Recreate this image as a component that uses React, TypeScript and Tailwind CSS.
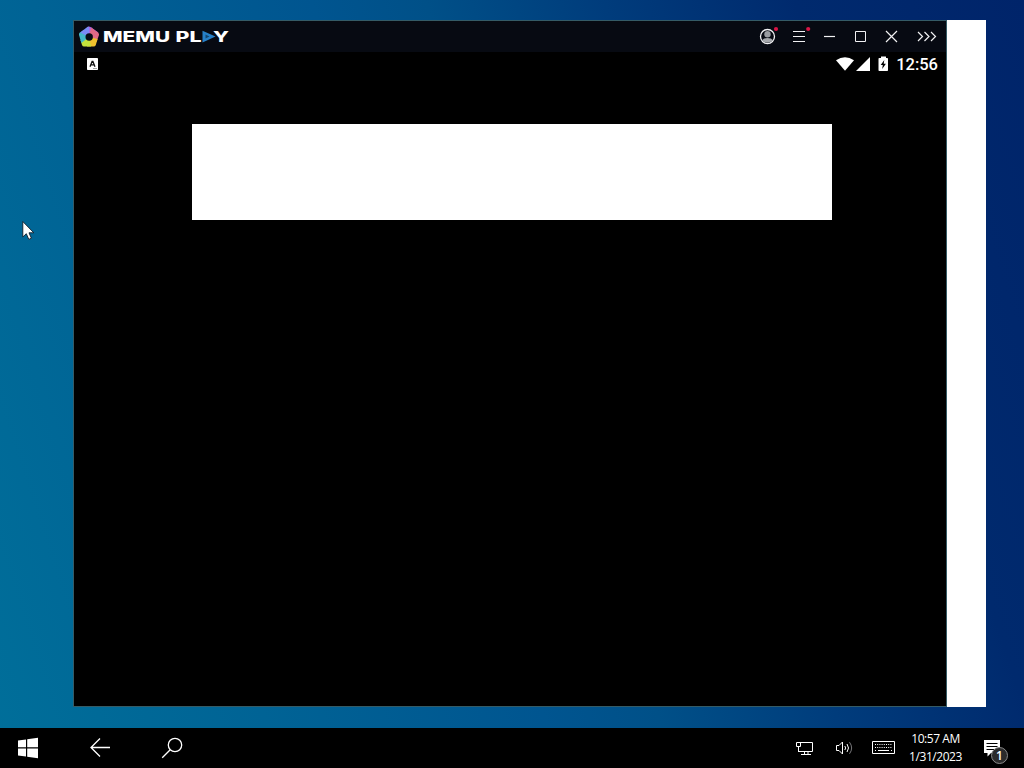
const LogoMark = () => (
  <svg className="h-[22px] w-[22px]" viewBox="0 0 22 22">
    <path d="M11 11 L9 1 Q11 0 13 1.2 L20.3 6.5 Z" fill="#a864e8" />
    <path d="M11 11 L13 1.5 L20 6.4 Q21.3 7.5 21 9 L18.5 16 Z" fill="#e26a86" />
    <path d="M11 11 L19.6 13 L17.8 19 Q17.2 20.6 15.5 20.6 L9 20.6 Z" fill="#f0c22e" />
    <path d="M11 11 L13 20.6 L6 20.6 Q4.6 20.6 4 19 L2.5 14 Z" fill="#c4e33c" />
    <path d="M11 11 L3.4 17 L1 9 Q0.6 7.6 2 6.6 L6 3.8 Z" fill="#42b8c8" />
    <path d="M11 11 L2.2 6.5 L9 1.2 Q10 0.6 11 0.7 Z" fill="#7b8cf5" />
    <circle cx="11.2" cy="11" r="3.7" fill="#080d14" />
  </svg>
);

const Wordmark = () => (
  <svg
    className="h-6 w-[132px] fill-white font-['Inter','Liberation_Sans',sans-serif] text-[15px] font-extrabold"
    viewBox="0 0 132 24"
  >
    <text x="1" y="17" textLength="67" lengthAdjust="spacingAndGlyphs">MEMU</text>
    <text x="73.5" y="17" textLength="26" lengthAdjust="spacingAndGlyphs">PL</text>
    <path d="M100.5 5.8 L113.5 11.6 L100.5 17.4 Z" fill="#2680c8" />
    <path d="M103.5 9.6 L107.5 11.6 L103.5 13.6 Z" fill="#12466f" />
    <text x="111" y="17" textLength="16" lengthAdjust="spacingAndGlyphs">Y</text>
  </svg>
);

const WindowButtons = () => (
  <svg className="h-[30px] w-[182px]" viewBox="0 0 182 30" fill="none" stroke="#f1f1f3" strokeWidth="1.2">
    <circle cx="9.5" cy="15.5" r="7" strokeWidth="1.3" />
    <circle cx="9.5" cy="13.2" r="3.2" fill="#999ca1" stroke="none" />
    <path d="M4 19.3 Q5.5 17 9.5 17 Q13.5 17 15 19.3 Q12.8 21.6 9.5 21.6 Q6.2 21.6 4 19.3 Z" fill="#a5a8ac" stroke="none" />
    <circle cx="18" cy="8" r="2.1" fill="#d81546" stroke="none" />
    <path d="M35 10.5 H47 M35 15.5 H47 M35 20.5 H47" />
    <circle cx="50.2" cy="8" r="2.1" fill="#d81546" stroke="none" />
    <path d="M66 15.5 H77" />
    <path d="M97.5 10.5 H107.5 V20.5 H97.5 Z" strokeWidth="1" />
    <path d="M128 10 L139 21 M139 10 L128 21" />
    <path d="M160 11 L164.5 15.5 L160 20 M166.5 11 L171 15.5 L166.5 20 M173 11 L177.5 15.5 L173 20" />
  </svg>
);

const KeyboardBadge = () => (
  <svg className="h-3 w-[11px]" viewBox="0 0 11 12">
    <rect width="11" height="12" rx="0.8" fill="#fff" />
    <path d="M3 8.7 L5.1 3.4 H5.9 L8 8.7 M4 6.8 H7" fill="none" stroke="#111" strokeWidth="1.3" />
    <path d="M6.5 10.5 H7.5 M8.5 10.5 H9.5" stroke="#444" />
  </svg>
);

const StatusIcons = () => (
  <svg className="h-4 w-[53px] fill-white" viewBox="0 0 53 16">
    <path d="M0 4.2 Q9 -1.8 18 4.2 L9 14.7 Z" />
    <path d="M34 1 V15 H20 Z" />
    <path d="M45 0.5 H50 V2 H51.2 Q52 2 52 2.8 V14.2 Q52 15 51.2 15 H43.3 Q42.5 15 42.5 14.2 V2.8 Q42.5 2 43.3 2 H45 Z" />
    <path d="M48.3 4 L44.7 9 H46.8 L46.2 13 L49.9 7.8 H47.7 Z" fill="#000" />
  </svg>
);

const TitleBar = () => (
  <div className="flex h-[31px] items-center bg-[#070a12]">
    <div className="flex w-[684px] items-center pl-1">
      <LogoMark />
      <div className="pl-0.5">
        <Wordmark />
      </div>
    </div>
    <div className="h-[31px]">
      <WindowButtons />
    </div>
  </div>
);

const StatusBar = () => (
  <div className="flex h-6 items-center justify-between pr-2 pl-[13px] text-white">
    <KeyboardBadge />
    <div className="flex items-center">
      <StatusIcons />
      <span className="w-[49px] pt-px text-right font-[Roboto,sans-serif] text-[16.5px] leading-[23px] font-medium">12:56</span>
    </div>
  </div>
);

const Emulator = () => (
  <div className="h-[687px] w-[874px] border border-[#355b66] bg-black">
    <TitleBar />
    <StatusBar />
    <div className="mt-12 ml-[118px] h-24 w-[640px] bg-white" />
  </div>
);

const Taskbar = () => (
  <div className="flex h-10 bg-black text-white">
    <div className="flex flex-1 items-center">
      <svg className="h-10 w-[200px]" viewBox="0 0 200 40" fill="none" stroke="#fff" strokeWidth="1.3">
        <path d="M18 12.6 L26 11.5 V19.3 H18 Z M27.2 11.3 L38 9.8 V19.3 H27.2 Z M18 20.5 H26 V28.6 L18 27.5 Z M27.2 20.5 H38 V30.2 L27.2 28.7 Z" fill="#fff" stroke="none" />
        <path d="M110 19.5 H91 M100 10.5 L91 19.5 L100 28.5" />
        <circle cx="175" cy="17" r="6.7" />
        <path d="M170.2 21.8 L162.2 29.8" />
      </svg>
    </div>
    <svg className="h-10 w-[114px]" viewBox="0 0 114 40" fill="none" stroke="#fff">
      <path d="M15 14.5 H27.5 V23.5 H14 M19.5 23.5 V26 M23 23.5 V26 M16 26.5 H26" />
      <path d="M11.5 14.5 H15.5 V18.5 H11.5 Z M13.5 18.5 V24" />
      <path d="M51.5 17.5 H54 L57.5 14 V26 L54 22.5 H51.5 Z" />
      <path d="M59.8 18 Q61.5 20 59.8 22" />
      <path d="M62 16 Q65 20 62 24" />
      <path d="M64.5 14.2 Q68.8 20 64.5 25.8" stroke="#77777a" />
      <path d="M87.5 13.5 H109.5 V25.5 H87.5 Z" />
      <path d="M90 16.5 H107.5 M90 19.5 H107.5" strokeDasharray="1 1.2" />
      <path d="M90 22.5 H91 M93 22.5 H104 M106 22.5 H107" />
    </svg>
    <div className="flex w-[72px] flex-col items-center pt-0.5 pl-px font-['Open_Sans','Noto_Sans',sans-serif] text-xs leading-[18px] tracking-[-0.45px]">
      <span>10:57 AM</span>
      <span>1/31/2023</span>
    </div>
    <div className="relative w-[53px]">
      <svg className="h-10 w-[53px]" viewBox="0 0 53 40">
        <path d="M13 12 H29 V25 H20 L16.5 28.5 V25 H13 Z" fill="#fff" />
        <path d="M15.5 15.5 H26.5 M15.5 18.5 H26.5 M15.5 21.5 H23" stroke="#000" />
      </svg>
      <span className="absolute top-[19px] left-5 flex size-[17px] items-center justify-center rounded-full border border-[#8a8a8a] bg-[#2b2b2b] font-['Open_Sans',sans-serif] text-xs font-semibold">1</span>
    </div>
  </div>
);

const Pointer = () => (
  <svg className="absolute top-[220px] left-[22px] h-[21px] w-[13px]" viewBox="0 0 13 21">
    <path d="M0.8 1.5 V17 L4.3 13.7 L6.8 19.4 L9.4 18.2 L7 12.8 H11.8 Z" fill="#fff" stroke="#101c28" strokeWidth="0.9" />
  </svg>
);

const App = () => {
  return (
    <div className="relative flex h-[768px] w-[1024px] flex-col overflow-hidden bg-linear-[72deg,#006f9a_0%,#006395_22%,#005590_44%,#005088_53%,#003c7c_67%,#002a6e_82%,#00246a_100%]">
      <div className="flex flex-1 items-start pt-5 pl-[73px]">
        <Emulator />
        <div className="h-[687px] w-[39px] bg-white" />
      </div>
      <Taskbar />
      <Pointer />
    </div>
  );
};

export default App;
